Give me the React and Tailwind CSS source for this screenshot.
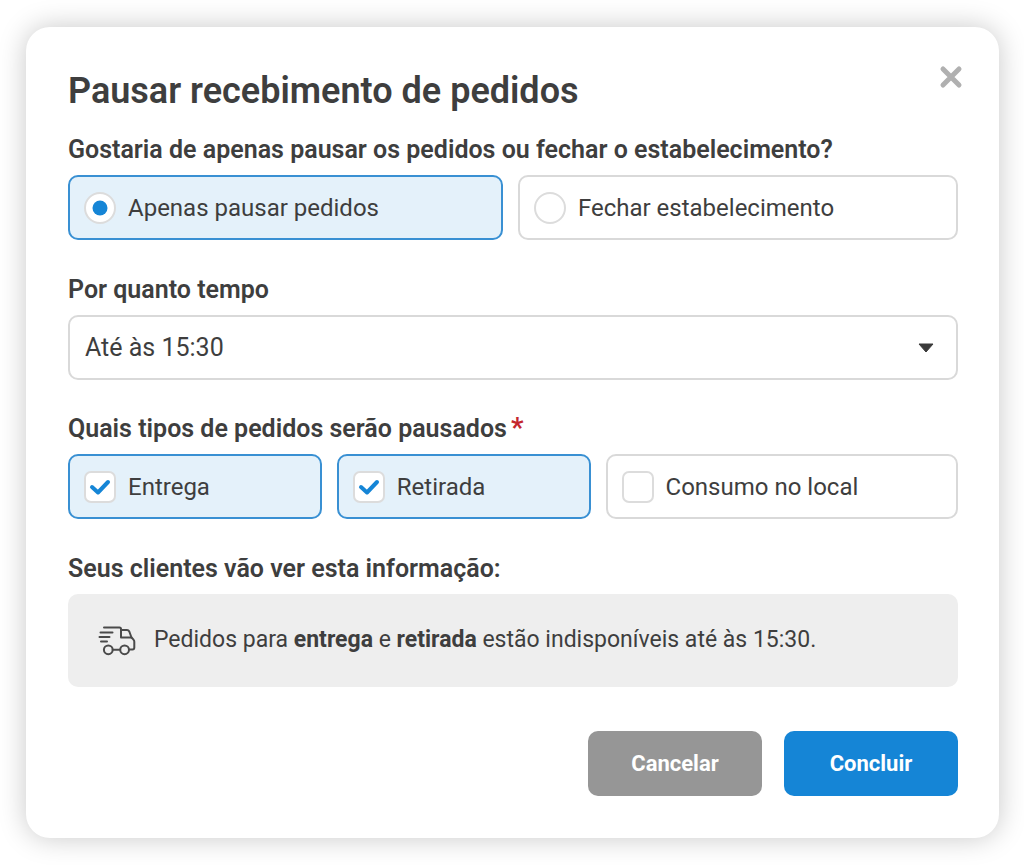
import { useState } from "react";

const TIMES = ["15:30", "16:00", "16:30", "17:00"];

const ORDER_TYPES = [
  { id: "entrega", label: "Entrega" },
  { id: "retirada", label: "Retirada" },
  { id: "local", label: "Consumo no local" },
];

function Option({ type, name, label, checked, onChange }) {
  const isRadio = type === "radio";

  return (
    <label
      className={`flex h-[65px] flex-auto cursor-pointer items-center gap-3 rounded-[10px] border-2 px-[14px] text-2xl ${
        checked ? "border-[#3990d3] bg-[#e4f1fa]" : "border-[#d9d9d9] bg-white"
      }`}
    >
      <span className="relative flex size-8 shrink-0">
        <input
          type={type}
          name={name}
          checked={checked}
          onChange={onChange}
          className={`size-8 appearance-none border-2 border-[#dcdcdc] bg-white ${
            isRadio ? "rounded-full" : "rounded-[7px]"
          }`}
        />
        {checked && (
          <svg
            viewBox="0 0 32 32"
            className="pointer-events-none absolute inset-0 size-8"
            aria-hidden="true"
          >
            {isRadio ? (
              <circle cx="16" cy="16" r="7.5" fill="#1585d6" />
            ) : (
              <path
                d="M8 16l6 5.5L24 11"
                fill="none"
                stroke="#1585d6"
                strokeWidth="4"
                strokeLinecap="round"
                strokeLinejoin="round"
              />
            )}
          </svg>
        )}
      </span>
      <span>{label}</span>
    </label>
  );
}

function TruckIcon() {
  return (
    <svg
      viewBox="0 0 38 30"
      className="h-[30px] w-[38px] shrink-0"
      fill="none"
      stroke="#4a4a4a"
      strokeWidth="2"
      strokeLinecap="round"
      strokeLinejoin="round"
      aria-hidden="true"
    >
      <path d="M6 1.500h15.500q1.500 0 1.500 1.500v8.500h10.500" />
      <path d="M23 4h6c1.200 0 1.800.5 2.300 1.500l2.200 6 2 2.200c.6.600.8 1.200.8 2V21.500c0 1.200-.7 2-1.800 2h-3" />
      <path d="M2.500 6.500H14.500M1.500 11H11.500M3 15.500h6" />
      <path d="M14.700 23.800h7.500" />
      <circle cx="10.300" cy="23.800" r="4.400" />
      <circle cx="26.600" cy="23.800" r="4.400" />
    </svg>
  );
}

export default function App() {
  const [mode, setMode] = useState("pausar");
  const [time, setTime] = useState("15:30");
  const [types, setTypes] = useState(["entrega", "retirada"]);

  const toggleType = (id) => {
    setTypes(
      types.includes(id) ? types.filter((t) => t !== id) : [...types, id]
    );
  };

  return (
    <div className="min-h-screen bg-white py-[27px] pr-[25px] pl-[26px] font-['Roboto',sans-serif] text-[#3e3e3e]">
      <form
        role="dialog"
        aria-labelledby="title"
        onSubmit={(e) => e.preventDefault()}
        className="relative rounded-3xl bg-white pt-[41px] pr-[41px] pb-[42px] pl-[42px] shadow-[0_0_28px_rgba(0,0,0,0.22)]"
      >
        <button
          type="button"
          aria-label="Fechar"
          className="absolute top-[38px] right-[36px] cursor-pointer"
        >
          <svg
            viewBox="0 0 24 24"
            className="size-6"
            fill="none"
            stroke="#b0b0b0"
            strokeWidth="5"
            strokeLinecap="round"
          >
            <path d="M4 4l16 16M20 4L4 20" />
          </svg>
        </button>

        <h1 id="title" className="text-4xl leading-[46px] font-semibold">
          Pausar recebimento de pedidos
        </h1>

        <fieldset className="mt-[21px]">
          <legend className="mb-[10px] text-[25px] leading-[30px] font-semibold">
            Gostaria de apenas pausar os pedidos ou fechar o estabelecimento?
          </legend>
          <div className="flex gap-[15px]">
            <Option
              type="radio"
              name="modo"
              label="Apenas pausar pedidos"
              checked={mode === "pausar"}
              onChange={() => setMode("pausar")}
            />
            <Option
              type="radio"
              name="modo"
              label="Fechar estabelecimento"
              checked={mode === "fechar"}
              onChange={() => setMode("fechar")}
            />
          </div>
        </fieldset>

        <div className="mt-[35px]">
          <label
            htmlFor="tempo"
            className="mb-[10px] block text-[25px] leading-[30px] font-semibold"
          >
            Por quanto tempo
          </label>
          <div className="relative">
            <select
              id="tempo"
              value={time}
              onChange={(e) => setTime(e.target.value)}
              className="h-[65px] w-full appearance-none rounded-[10px] border-2 border-[#d9d9d9] bg-white px-[15px] text-[25px]"
            >
              {TIMES.map((t) => (
                <option key={t} value={t}>
                  Até às {t}
                </option>
              ))}
            </select>
            <svg
              viewBox="0 0 16 10"
              className="pointer-events-none absolute top-7 right-6 h-[10px] w-4"
              aria-hidden="true"
            >
              <path
                d="M1 1h14L8 9z"
                fill="#3a3a3a"
                stroke="#3a3a3a"
                strokeLinejoin="round"
              />
            </svg>
          </div>
        </div>

        <fieldset className="mt-[34px]">
          <legend className="mb-[10px] text-[25px] leading-[30px] font-semibold">
            Quais tipos de pedidos serão pausados
            <span className="ml-1 text-[28px] leading-5 text-[#c4262e]">*</span>
          </legend>
          <div className="grid grid-cols-[18fr_18fr_25fr] gap-[15px]">
            {ORDER_TYPES.map((t) => (
              <Option
                key={t.id}
                type="checkbox"
                name={t.id}
                label={t.label}
                checked={types.includes(t.id)}
                onChange={() => toggleType(t.id)}
              />
            ))}
          </div>
        </fieldset>

        <h2 className="mt-[35px] text-[25px] leading-[30px] font-semibold">
          Seus clientes vão ver esta informação:
        </h2>
        <div className="mt-[10px] flex min-h-[93px] items-center gap-[18px] rounded-[10px] bg-[#eeeeee] px-[30px] text-[23px]">
          <TruckIcon />
          <p>
            Pedidos para <b className="font-bold">entrega</b> e{" "}
            <b className="font-bold">retirada</b> estão indisponíveis até às{" "}
            {time}.
          </p>
        </div>

        <div className="mt-11 flex justify-end gap-[22px] text-[22px] font-bold text-white">
          <button
            type="button"
            className="h-[65px] w-[174px] cursor-pointer rounded-[10px] bg-[#969696]"
          >
            Cancelar
          </button>
          <button
            type="submit"
            className="h-[65px] w-[174px] cursor-pointer rounded-[10px] bg-[#1585d6]"
          >
            Concluir
          </button>
        </div>
      </form>
    </div>
  );
}
